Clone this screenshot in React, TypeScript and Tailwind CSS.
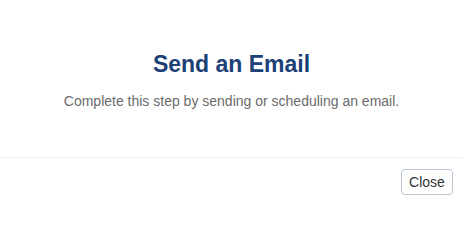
export default function App() {
  return (
    <div
      className="w-[463px] h-[203px] bg-white flex flex-col"
      style={{ fontFamily: '"Liberation Sans", Arial, sans-serif' }}
    >
      <div className="h-[158px] border-b border-[#efefef] flex flex-col items-center pt-[51px]">
        <h2 className="text-[23px] leading-[26px] font-bold text-[#1b4177]">
          Send an Email
        </h2>
        <p className="mt-[14px] text-[14px] leading-[20px] text-[#6b6b6b]">
          Complete this step by sending or scheduling an email.
        </p>
      </div>
      <div className="flex justify-end pt-[11px] pr-[10px]">
        <button className="w-[52px] h-[26px] rounded-[4px] border border-[#b8c7d3] bg-white text-[14px] text-[#333333] flex items-center justify-center">
          Close
        </button>
      </div>
    </div>
  );
}
